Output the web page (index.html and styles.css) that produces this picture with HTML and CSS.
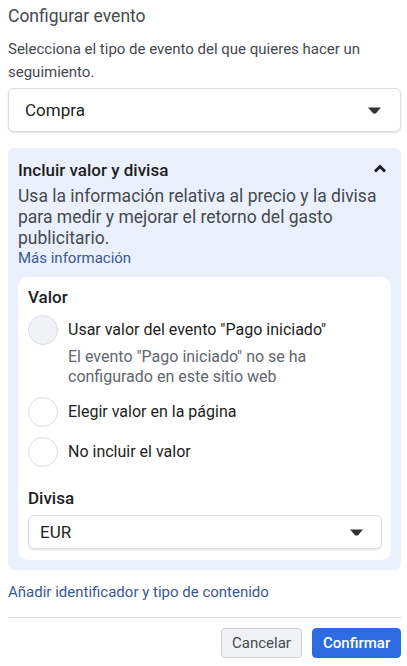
FILE: index.html
```html
<!DOCTYPE html>
<html lang="es">
<head>
<meta charset="utf-8">
<link rel="stylesheet" href="styles.css">
</head>
<body>
<div class="page">
  <div class="title">Configurar evento</div>
  <div class="desc">Selecciona el tipo de evento del que quieres hacer un seguimiento.</div>
  <div class="select big">
    <span>Compra</span>
    <svg class="caret" width="13" height="7" viewBox="0 0 13 7"><path d="M0 0.5h13l-5.2 6h-2.6z" fill="#333"/></svg>
  </div>
  <div class="panel">
    <div class="panel-head">
      <span>Incluir valor y divisa</span>
      <svg class="chev" width="14" height="9" viewBox="0 0 14 9"><path d="M2 7.5 7 2.5l5 5" fill="none" stroke="#1c1e21" stroke-width="3"/></svg>
    </div>
    <div class="panel-desc">Usa la información relativa al precio y la divisa para medir y mejorar el retorno del gasto publicitario.</div>
    <a class="link more">Más información</a>
    <div class="card">
      <div class="label">Valor</div>
      <div class="radio first">
        <span class="circle disabled"></span>
        <div class="rtext">
          <div class="rlabel">Usar valor del evento "Pago iniciado"</div>
          <div class="rsub">El evento "Pago iniciado" no se ha configurado en este sitio web</div>
        </div>
      </div>
      <div class="radio">
        <span class="circle"></span>
        <div class="rtext"><div class="rlabel">Elegir valor en la página</div></div>
      </div>
      <div class="radio">
        <span class="circle"></span>
        <div class="rtext"><div class="rlabel">No incluir el valor</div></div>
      </div>
      <div class="label divisa">Divisa</div>
      <div class="select small">
        <span>EUR</span>
        <svg class="caret" width="13" height="7" viewBox="0 0 13 7"><path d="M0 0.5h13l-5.2 6h-2.6z" fill="#333"/></svg>
      </div>
    </div>
  </div>
  <a class="link add">Añadir identificador y tipo de contenido</a>
  <div class="sep"></div>
  <div class="actions">
    <button class="btn cancel">Cancelar</button>
    <button class="btn confirm">Confirmar</button>
  </div>
</div>
</body>
</html>
```

FILE: styles.css
```css
* { box-sizing: border-box; }
html, body { margin: 0; padding: 0; background: #fff; }
body { font-family: Roboto, "Noto Sans", sans-serif; color: #1c1e21; }
.page { width: 393px; margin-left: 8px; }
.title { margin-top: 6px; font-size: 17.5px; line-height: 20px; color: #444950; }
.desc { margin-top: 12px; font-size: 15px; line-height: 23px; color: #444950; }
.select {
  display: flex; align-items: center; justify-content: space-between;
  background: #fff; border: 1px solid #dadde1; border-radius: 6px;
  box-shadow: 0 1px 2px rgba(0,0,0,0.12);
}
.select.big { margin-top: 4px; height: 44px; padding: 0 19px 0 16px; font-size: 17px; color: #1c1e21; }
.select.small { margin-top: 7px; height: 34px; padding: 0 18px 0 11px; font-size: 17px; color: #1c1e21; }
.panel { margin-top: 16px; background: #ebf1fc; border-radius: 6px; padding: 12px 10px 10px 10px; }
.panel-head { display: flex; justify-content: space-between; align-items: center; font-size: 17px; font-weight: 500; line-height: 20px; padding-right: 4px; }
.chev { margin-top: -3px; }
.panel-desc { margin-top: 6px; font-size: 17.5px; line-height: 21px; color: #444950; padding-right: 10px; }
.link { display: block; color: #385898; font-size: 15px; cursor: pointer; }
.more { line-height: 18px; }
.card { margin-top: 10px; background: #fff; border-radius: 10px; padding: 10px 9px 11px 10px; }
.label { font-size: 17px; font-weight: 500; line-height: 20px; }
.label.divisa { margin-top: 21px; }
.radio { display: flex; margin-top: 10px; }
.radio.first { margin-top: 8px; }
.circle { flex: none; width: 30px; height: 30px; border-radius: 50%; border: 1px solid #dadde1; background: #fff; }
.circle.disabled { background: #f0f2f5; }
.rtext { margin-left: 10px; }
.rlabel { font-size: 16px; line-height: 30px; color: #1c1e21; }
.rsub { margin-top: 2px; font-size: 16px; line-height: 20px; color: #606770; padding-right: 20px; }
.add { margin-top: 12px; line-height: 20px; }
.sep { margin-top: 15px; height: 1px; background: #dadde1; }
.actions { display: flex; justify-content: flex-end; gap: 10px; margin-top: 10px; }
.btn { height: 30px; border-radius: 4px; font-family: Roboto, sans-serif; font-size: 15px; padding: 0 10px; }
.cancel { width: 81px; background: #f0f2f5; border: 1px solid #ccd0d5; color: #444950; }
.confirm { width: 89px; background: #2d6ce0; border: 1px solid #2d6ce0; color: #fff; font-weight: 500; }
```
